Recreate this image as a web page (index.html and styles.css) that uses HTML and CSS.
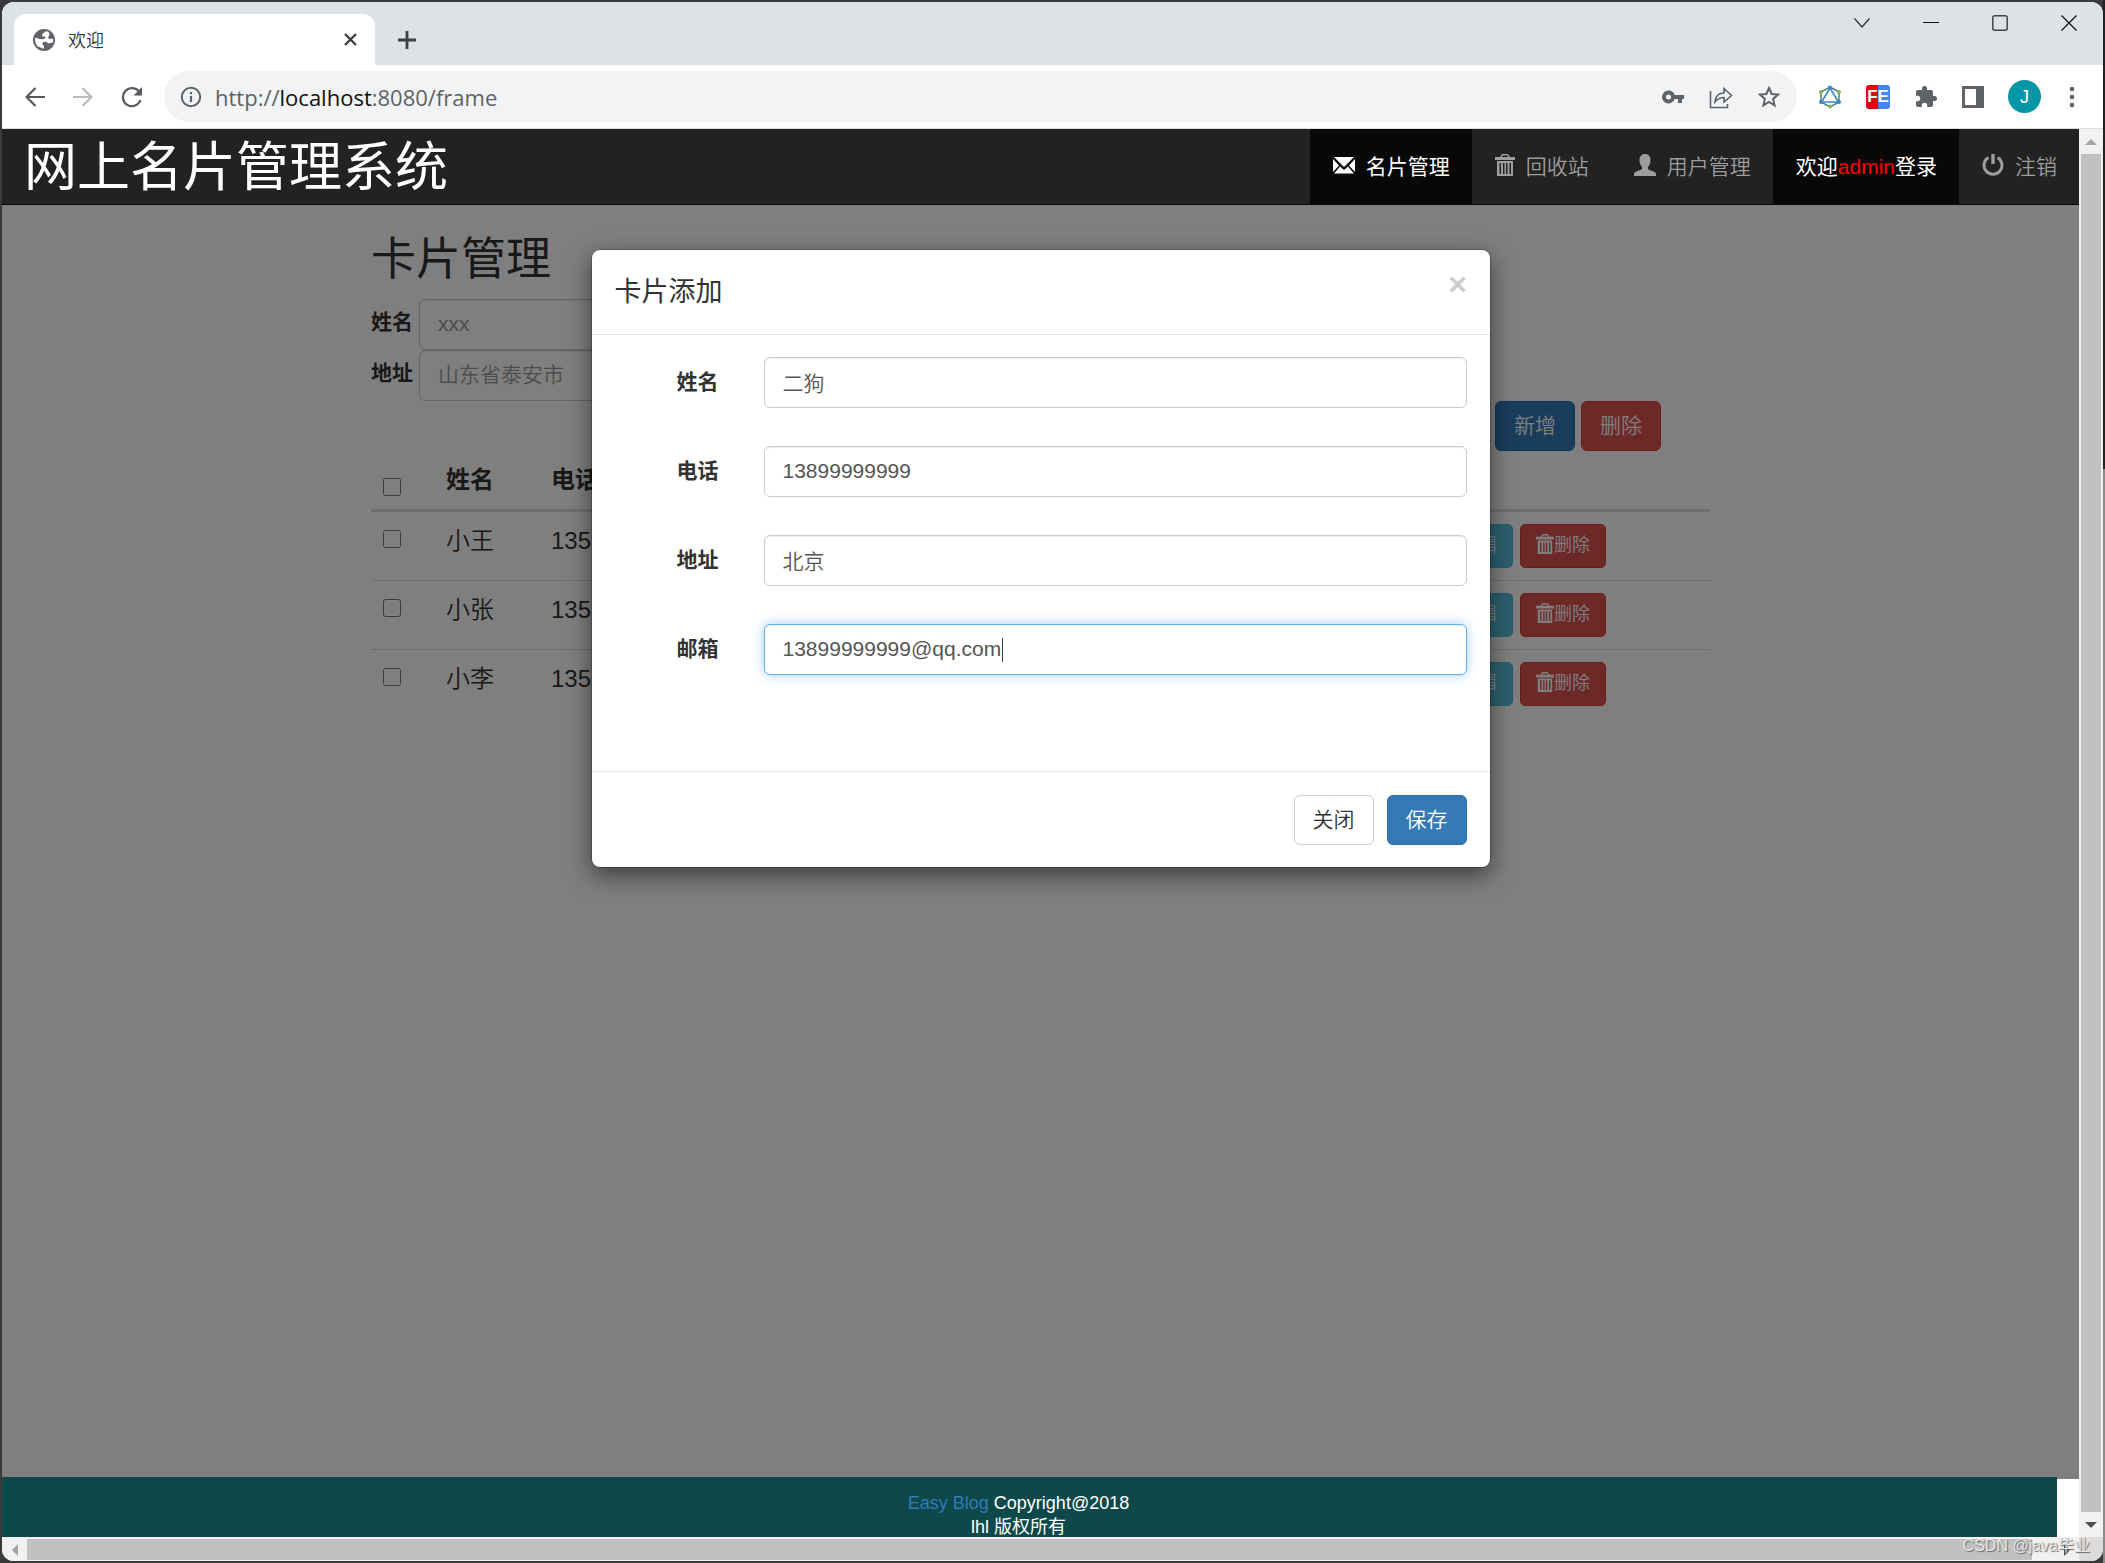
FILE: index.html
```html
<!DOCTYPE html>
<html lang="zh-CN">
<head>
<meta charset="utf-8">
<title>欢迎</title>
<link rel="stylesheet" href="styles.css">
</head>
<body>
<svg class="defs" width="0" height="0" aria-hidden="true">
  <symbol id="trash" viewBox="0 0 20 22">
    <path fill="currentColor" fill-rule="evenodd" d="M7 0h6l2 3h5v3H0V3h5zM7.500 1.500 6.800 3h6.400l-.7-1.500zM2 7h16v15H2zM4.500 9v11h1.500V9zM8 9v11h1.500V9zM11 9v11h1.500V9zM14.500 9v11H16V9z"/>
  </symbol>
  <symbol id="pencil" viewBox="0 0 20 20">
    <path fill="currentColor" d="M15 1l4 4-2.500 2.500-4-4zM11.500 4.500l4 4L6 18l-5 1 1-5z"/>
  </symbol>
</svg>

<div class="window">
  <div class="tabstrip">
    <div class="tab">
      <svg class="globe" viewBox="0 0 22 22"><circle cx="11" cy="11" r="11" fill="#5f6368"/><path fill="#fff" d="M12.500 2.200c-1 1.600-3 1.800-3.500 3.600-.3 1.500 1 1.700 2.600 1.700 1.200 0 1 1.800 0 2.300-1.500.8-4.800.3-6.800-.6L2.300 8.500c-.6 3 0 6.500 2.400 9l6.300 2.300v-2.300c0-1.200-1.600-1.400-1.600-2.800 0-1.500 1.200-1.900 3-1.900 1.600 0 2 1.700 3.300 1.700 1.400 0 2.500-.9 4-.6.500-1.500.6-3 .3-4.400-1.300.6-3.700.8-4.600-.4-.8-1.200.8-2 1-3.400.1-1.300-1-2-.6-3z"/></svg>
      <span class="tab-title">欢迎</span>
      <button class="plain tab-close" aria-label="关闭标签页"><svg width="13" height="13" viewBox="0 0 13 13"><path d="M1 1l11 11M12 1L1 12" stroke="#3c4043" stroke-width="2.400"/></svg></button>
    </div>
    <button class="plain new-tab" aria-label="新标签页"><svg width="18" height="18" viewBox="0 0 18 18"><path d="M9 0v18M0 9h18" stroke="#3c4043" stroke-width="2.800"/></svg></button>
    <div class="win-controls">
      <button class="plain" aria-label="搜索标签页"><svg width="16" height="16" viewBox="0 0 16 16"><path d="M.5 3.500 8 12l7.500-8.500" fill="none" stroke="#333" stroke-width="1.300"/></svg></button>
      <button class="plain" aria-label="最小化"><svg width="16" height="16" viewBox="0 0 16 16"><path d="M0 7.500h16" stroke="#111"/></svg></button>
      <button class="plain" aria-label="最大化"><svg width="16" height="16" viewBox="0 0 16 16"><rect x=".8" y=".8" width="14.400" height="14.400" rx="2" fill="none" stroke="#444" stroke-width="1.500"/></svg></button>
      <button class="plain" aria-label="关闭"><svg width="16" height="16" viewBox="0 0 16 16"><path d="M.5.5l15 15M15.500.5l-15 15" stroke="#111" stroke-width="1.300"/></svg></button>
    </div>
  </div>

  <div class="toolbar">
    <div class="nav-buttons">
      <button class="plain" aria-label="后退"><svg width="20" height="20" viewBox="0 0 20 20"><path d="M20 10H2M10.500 1 1.500 10l9 9" fill="none" stroke="#55595d" stroke-width="2.200"/></svg></button>
      <button class="plain" aria-label="前进"><svg width="20" height="20" viewBox="0 0 20 20"><path d="M0 10h18M9.500 1l9 9-9 9" fill="none" stroke="#babcbe" stroke-width="2.200"/></svg></button>
      <button class="plain" aria-label="刷新"><svg width="22" height="22" viewBox="0 0 22 22"><path d="M18.500 6.200A9 9 0 1 0 19.500 14" fill="none" stroke="#55595d" stroke-width="2.200"/><path d="M21 1v8.500h-8.500z" fill="#55595d"/></svg></button>
    </div>
    <div class="omnibox">
      <svg width="22" height="22" viewBox="0 0 22 22"><circle cx="11" cy="11" r="9.200" fill="none" stroke="#5f6368" stroke-width="2"/><path d="M11 10v6M11 6v2.200" stroke="#5f6368" stroke-width="2.200"/></svg>
      <span class="url">http://<b>localhost</b>:8080/frame</span>
      <span class="omni-icons">
        <button class="plain" aria-label="密码"><svg width="22" height="22" viewBox="0 0 22 22"><path fill="#5f6368" fill-rule="evenodd" d="M6.500 4.500a6.500 6.500 0 0 1 6.200 4.500H22v4h-2v4h-4v-4h-3.300A6.500 6.500 0 1 1 6.500 4.500zM6.500 8.500a2.500 2.500 0 1 0 0 5 2.500 2.500 0 0 0 0-5z"/></svg></button>
        <button class="plain" aria-label="分享"><svg width="24" height="24" viewBox="0 0 24 24"><path d="M1.500 6v16.500h17V19M6 17c.5-6 3.500-9 9-9V3.500l7.500 7-7.500 6.500v-4.500c-4.500 0-6.500 1.500-9 4.500z" fill="none" stroke="#5f6368" stroke-width="1.600"/></svg></button>
        <button class="plain" aria-label="收藏"><svg width="22" height="22" viewBox="0 0 22 22"><path d="M11 2l2.600 6 6.400.6-4.900 4.300 1.500 6.500L11 16l-5.600 3.400 1.500-6.500L2 8.600 8.400 8z" fill="none" stroke="#5f6368" stroke-width="2"/></svg></button>
      </span>
    </div>
    <div class="extensions">
      <button class="plain" aria-label="GraphQL"><svg width="24" height="24" viewBox="0 0 24 24"><path d="M12 2l9 5v10l-9 5-9-5V7z" fill="none" stroke="#4f7f78" stroke-width="1.500"/><path d="M12 3 3.500 17h17z" fill="none" stroke="#3a86c8" stroke-width="1.600"/><g fill="#3a86c8"><circle cx="12" cy="2.500" r="2"/><circle cx="3" cy="17" r="2"/><circle cx="21" cy="17" r="2"/></g><g fill="#7cb857"><circle cx="3" cy="7" r="2"/><circle cx="21" cy="7" r="2"/><circle cx="12" cy="21.500" r="2"/></g></svg></button>
      <button class="plain fe" aria-label="FE">FE</button>
      <button class="plain" aria-label="扩展程序"><svg width="24" height="24" viewBox="0 0 24 24"><path fill="#5f6368" d="M20.500 11H19V7a2 2 0 0 0-2-2h-4V3.500a2.500 2.500 0 0 0-5 0V5H4a2 2 0 0 0-2 2v3.800h1.500a2.700 2.700 0 0 1 0 5.400H2V20a2 2 0 0 0 2 2h3.800v-1.500a2.700 2.700 0 0 1 5.400 0V22H17a2 2 0 0 0 2-2v-4h1.500a2.500 2.500 0 0 0 0-5z"/></svg></button>
      <button class="plain" aria-label="侧边栏"><svg width="22" height="22" viewBox="0 0 22 22"><path fill="#5f6368" fill-rule="evenodd" d="M0 0h22v22H0zM3 3v16h11V3z"/></svg></button>
      <button class="plain avatar" aria-label="账户">J</button>
      <button class="plain" aria-label="菜单"><svg width="14" height="22" viewBox="0 0 14 22"><g fill="#5f6368"><circle cx="7" cy="3" r="2.300"/><circle cx="7" cy="11" r="2.300"/><circle cx="7" cy="19" r="2.300"/></g></svg></button>
    </div>
  </div>

  <div class="viewport">
    <div class="page">
      <nav class="navbar">
        <a class="brand" href="#">网上名片管理系统</a>
        <a class="nav-link active" href="#"><svg width="22" height="22" viewBox="0 0 22 22"><path fill="currentColor" d="M1 3h20l-10 10zM0 5l6 6.500L0 18zM22 5v13l-6-6.500zM7 12.500l4 3.500 4-3.500 6 7H1z"/></svg>名片管理</a>
        <a class="nav-link" href="#"><svg width="20" height="22"><use href="#trash"/></svg>回收站</a>
        <a class="nav-link" href="#"><svg width="22" height="22" viewBox="0 0 22 22"><path fill="currentColor" d="M11 0c3.500 0 5.500 2.500 5.500 6 0 3-1 5.500-2.500 7v2c1 1.500 8 2 8 5v2H0v-2c0-3 7-3.500 8-5v-2C6.500 11.500 5.500 9 5.500 6 5.500 2.500 7.500 0 11 0z"/></svg>用户管理</a>
        <a class="nav-link active" href="#"><span>欢迎<span class="user">admin</span>登录</span></a>
        <a class="nav-link" href="#"><svg width="22" height="22" viewBox="0 0 22 22"><path d="M6.500 3.500a9 9 0 1 0 9 0" fill="none" stroke="currentColor" stroke-width="3"/><path d="M11 0v10" stroke="currentColor" stroke-width="3.400"/></svg>注销</a>
      </nav>

      <main class="content">
        <div class="container">
          <h1>卡片管理</h1>
          <form class="search">
            <div class="search-row"><label for="q-name">姓名</label><input class="control" id="q-name" placeholder="xxx"></div>
            <div class="search-row"><label for="q-addr">地址</label><input class="control" id="q-addr" placeholder="山东省泰安市"></div>
          </form>
          <div class="actions">
            <button class="btn primary">新增</button>
            <button class="btn danger">删除</button>
          </div>
          <table class="cards">
            <colgroup><col class="c-check"><col class="c-name"><col><col class="c-ops"></colgroup>
            <thead>
              <tr><th><input type="checkbox" aria-label="全选"></th><th>姓名</th><th>电话</th><th></th></tr>
            </thead>
            <tbody>
              <tr><td><input type="checkbox" aria-label="小王"></td><td>小王</td><td>135</td><td><div class="ops"><button class="btn small info"><svg width="18" height="20"><use href="#pencil"/></svg>编辑</button><button class="btn small danger"><svg width="18" height="20"><use href="#trash"/></svg>删除</button></div></td></tr>
              <tr><td><input type="checkbox" aria-label="小张"></td><td>小张</td><td>135</td><td><div class="ops"><button class="btn small info"><svg width="18" height="20"><use href="#pencil"/></svg>编辑</button><button class="btn small danger"><svg width="18" height="20"><use href="#trash"/></svg>删除</button></div></td></tr>
              <tr><td><input type="checkbox" aria-label="小李"></td><td>小李</td><td>135</td><td><div class="ops"><button class="btn small info"><svg width="18" height="20"><use href="#pencil"/></svg>编辑</button><button class="btn small danger"><svg width="18" height="20"><use href="#trash"/></svg>删除</button></div></td></tr>
            </tbody>
          </table>
        </div>

        <div class="backdrop">
          <form class="modal" role="dialog" aria-labelledby="modal-title">
            <header class="modal-header">
              <h2 id="modal-title">卡片添加</h2>
              <button type="button" class="plain close" aria-label="关闭">×</button>
            </header>
            <div class="modal-body">
              <div class="field"><label for="name">姓名</label><input class="control" id="name" value="二狗"></div>
              <div class="field"><label for="phone">电话</label><input class="control" id="phone" value="13899999999"></div>
              <div class="field"><label for="addr">地址</label><input class="control" id="addr" value="北京"></div>
              <div class="field"><label for="mail">邮箱</label><input class="control focused" id="mail" value="13899999999@qq.com"></div>
            </div>
            <footer class="modal-footer">
              <button type="button" class="btn default">关闭</button>
              <button type="button" class="btn primary">保存</button>
            </footer>
          </form>
        </div>
      </main>

      <footer class="footer">
        <p><a href="#">Easy Blog</a> Copyright@2018<br>lhl 版权所有</p>
      </footer>
    </div>
    <div class="vbar"><i class="arrow up"></i><i class="thumb"></i><i class="arrow down"></i></div>
    <div class="hbar"><i class="arrow left"></i><i class="thumb"></i><i class="arrow right"></i></div>
    <div class="corner"></div>
  </div>
</div>
<div class="watermark">CSDN @java毕业</div>
</body>
</html>
```
FILE: styles.css
```css
* { box-sizing: border-box; }
body {
  margin: 0;
  background: linear-gradient(#222 30%, #8a8a8a 30%) right / 2px 100% no-repeat #3a3a3c;
  color: #333;
  font: 350 21px/30px "Liberation Sans", "Noto Sans CJK SC", sans-serif;
}
button, input { font: inherit; color: inherit; }
svg { display: block; flex: none; }
.defs { position: absolute; }
.plain { display: flex; align-items: center; justify-content: center; padding: 0; border: 0; background: none; }

.window {
  display: flex;
  flex-direction: column;
  min-height: 100vh;
  border: 2px solid transparent;
  border-radius: 14px;
  overflow: hidden;
  background: #fff padding-box;
}

/* browser chrome */
.tabstrip { display: flex; height: 63px; padding: 12px 18px 0 12px; background: #dee1e6; }
.tab {
  display: flex;
  align-items: center;
  gap: 13px;
  width: 361px;
  padding: 0 18px 0 19px;
  border-radius: 12px 12px 0 0;
  background: #fff;
}
.globe { width: 22px; height: 22px; }
.tab-title { flex: 1; padding-top: 2px; font-size: 18px; }
.new-tab { width: 64px; }
.win-controls { display: flex; align-items: flex-start; gap: 53px; margin-left: auto; padding: 1px 8px 0 0; }
.toolbar { display: flex; align-items: center; height: 64px; border-bottom: 1px solid #ddd; padding: 0 24px 0 23px; }
.nav-buttons { display: flex; gap: 28px; width: 139px; align-items: center; }
.omnibox {
  display: flex;
  align-items: center;
  gap: 13px;
  flex: 1;
  height: 51px;
  padding: 0 17px 0 16px;
  border-radius: 26px;
  background: #f1f3f4;
}
.url { flex: 1; font: 400 22px/30px "Open Sans", sans-serif; color: #5f6368; }
.url b { font-weight: 400; color: #111; }
.omni-icons { display: flex; gap: 25px; align-items: center; }
.extensions { display: flex; align-items: center; gap: 24px; margin-left: 21px; }
.fe {
  width: 24px;
  height: 24px;
  border-radius: 3px;
  background: linear-gradient(90deg, #e60012 50%, #4285f4 50%);
  color: #fff;
  font: 700 17px/24px "Liberation Sans", sans-serif;
}
.avatar { width: 33px; height: 33px; border-radius: 50%; background: #0097a7; color: #fff; font-size: 18px; }

/* scrollable viewport */
.viewport { flex: 1; display: grid; grid-template: 1fr 24px / 1fr 24px; }
.page { display: flex; flex-direction: column; }
.vbar, .hbar { display: flex; background: #f1f1f1; }
.vbar { flex-direction: column; align-items: center; padding: 0 2px; }
.hbar { align-items: center; padding: 2px 0 1px; }
.thumb { flex: 1; align-self: stretch; background: #c1c1c1; }
.vbar .arrow { height: 25px; }
.hbar .arrow { width: 25px; height: 21px; }
.hbar .arrow.right { width: 47px; padding-left: 22px; }
.arrow { display: flex; align-items: center; justify-content: center; color: #a3a3a3; }
.arrow::before { content: ""; border: 6px solid transparent; }
.up::before { border-bottom-color: currentColor; border-top: 0; }
.down::before { border-top-color: #505050; border-bottom: 0; }
.left::before { border-right-color: currentColor; border-left: 0; }
.right::before { border-left-color: #505050; border-right: 0; }
.corner { background: #dcdcdc; }

/* navbar */
.navbar { display: flex; height: 76px; border-bottom: 1px solid #080808; background: #222; color: #9d9d9d; }
.navbar a { color: inherit; text-decoration: none; }
.navbar .brand { margin-right: auto; padding-left: 22px; color: #fff; font-size: 53px; line-height: 78px; font-weight: 400; }
.nav-link { display: flex; align-items: center; gap: 11px; padding: 0 22px 0 23px; }
.nav-link svg { margin-bottom: 4px; }
.navbar .active { background: #080808; color: #fff; font-weight: 400; }
.user { color: #f00; }

/* card list */
.content { position: relative; flex: 1; }
.container { max-width: 1339px; margin: 0 auto; }
h1 { margin: 0; padding: 30px 0 14px; font-size: 45px; line-height: 50px; font-weight: 400; }
.search-row { display: flex; gap: 6px; }
label { font-weight: 700; }
.search-row label { line-height: 46px; }
.search-row .control { width: 300px; }
.control {
  height: 51px;
  padding: 8px 18px 10px;
  border: 1px solid #ccc;
  border-radius: 6px;
  background: #fff;
  color: #555;
  box-shadow: inset 0 1px 1px rgba(0, 0, 0, .075);
}
.control::placeholder { color: #999; }
.control.focused {
  border-color: #66afe9;
  outline: 0;
  background: linear-gradient(#333, #333) 237px center / 1px 24px no-repeat #fff;
  box-shadow: inset 0 1px 1px rgba(0, 0, 0, .075), 0 0 12px rgba(102, 175, 233, .6);
}
.btn {
  display: inline-flex;
  align-items: center;
  justify-content: center;
  height: 50px;
  padding: 0 18px;
  border: 1px solid transparent;
  border-radius: 6px;
  color: #fff;
}
.primary { background: #337ab7; border-color: #2e6da4; }
.danger { background: #d9534f; border-color: #d43f3a; }
.info { background: #5bc0de; border-color: #46b8da; }
.default { background: #fff; border-color: #ccc; color: #333; }
.small { width: 86px; height: 44px; padding: 0 14px 2px; border-radius: 5px; font-size: 18px; }
.small svg { margin-bottom: 3px; }
.actions { display: flex; justify-content: flex-end; gap: 6px; padding-right: 49px; }
.cards { width: 100%; table-layout: fixed; border-collapse: collapse; font-size: 24px; line-height: 34px; }
.c-check { width: 63px; }
.c-name { width: 105px; }
.c-ops { width: 295px; }
th, td { padding: 12px; text-align: left; vertical-align: top; }
th { border-bottom: 3px solid #ddd; }
tr + tr td { border-top: 1px solid #ddd; }
.cards input { display: block; width: 18px; height: 18px; margin: 6px 0 0; }
.cards th input { margin-top: 15px; }
.ops { display: flex; gap: 7px; }

/* dialog */
.backdrop { position: absolute; inset: 0 0 -2px; padding-top: 44px; background: rgba(0, 0, 0, .5); }
.modal {
  width: 900px;
  max-width: 100%;
  margin: 0 auto;
  border: 1px solid rgba(0, 0, 0, .2);
  border-radius: 9px;
  background: #fff;
  background-clip: padding-box;
  box-shadow: 0 8px 23px rgba(0, 0, 0, .5);
}
.modal-header { display: flex; justify-content: space-between; padding: 22px 23px; border-bottom: 1px solid #e5e5e5; }
h2 { margin: 0; font-size: 27px; line-height: 40px; font-weight: 400; }
.close { width: 18px; height: 24px; color: #ccc; font-size: 32px; font-weight: 700; line-height: 24px; }
.modal-body { display: flex; flex-direction: column; gap: 38px; padding: 22px 23px 96px; }
.field { display: flex; gap: 45px; }
.field label { width: 104px; line-height: 50px; text-align: right; }
.field .control { flex: 1; }
.modal-footer { display: flex; justify-content: flex-end; gap: 13px; padding: 23px 23px 22px; border-top: 1px solid #e5e5e5; }

.footer { position: relative; height: 60px; margin-right: 22px; padding: 14px 22px 0 0; background: #0d494b; color: #fff; text-align: center; }
.footer p { margin: 0; font-size: 18px; line-height: 24px; font-weight: 400; }
.footer a { color: #337ab7; text-decoration: none; }

.watermark {
  position: absolute;
  right: 15px;
  bottom: 4px;
  color: #e4e4e4;
  font-size: 16px;
  line-height: 26px;
  text-shadow: 1px 1px 1px #666;
}
```
